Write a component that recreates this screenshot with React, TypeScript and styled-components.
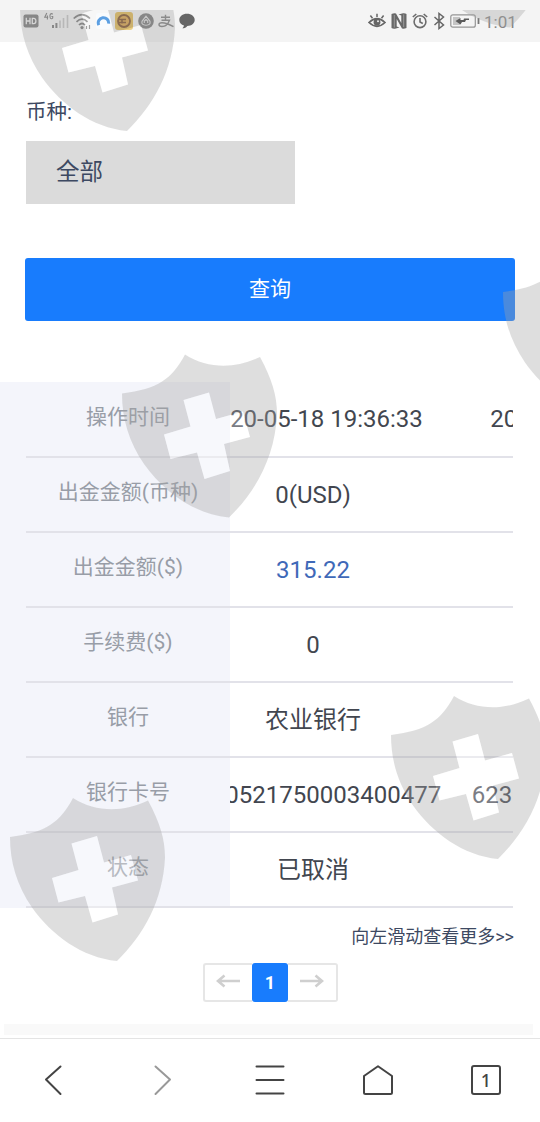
import React from 'react';
import styled, { createGlobalStyle } from 'styled-components';

const GlobalStyle = createGlobalStyle`
  * { box-sizing: border-box; }
  body {
    margin: 0;
    background: #fff;
    font-family: Roboto, "Noto Sans CJK SC", sans-serif;
    color: #3d4962;
  }
  svg { display: block; }
`;

const Screen = styled.div`
  position: relative;
  width: 540px;
  height: 1122px;
  overflow: hidden;
  display: flex;
  flex-direction: column;
  background: #fff;
`;

const StatusBar = styled.header`
  height: 42px;
  flex: none;
  display: flex;
  align-items: center;
  justify-content: space-between;
  padding: 0 23px 0 23px;
  background: #f4f4f4;
`;

const StatusGroup = styled.div<{ $gap: number }>`
  display: flex;
  align-items: center;
  gap: ${(p) => p.$gap}px;
`;

const Clock = styled.span`
  font-size: 17px;
  line-height: 20px;
  padding-top: 1px;
  color: #858585;
  width: 33px;
  margin-left: -1px;
  white-space: nowrap;
`;

const Filters = styled.section`
  display: flex;
  flex-direction: column;
  padding: 55px 25px 0 26px;
`;

const FieldLabel = styled.label`
  font-size: 20.5px;
  line-height: 30px;
  height: 30px;
`;

const SelectBox = styled.div`
  margin-top: 14px;
  width: 269px;
  height: 63px;
  padding-left: 30px;
  background: #dbdbdb;
  font-size: 23.5px;
  line-height: 62px;
`;

const QueryButton = styled.button`
  margin: 54px 0 0 -1px;
  height: 63px;
  padding: 0 0 5px;
  border: 0;
  border-radius: 3px;
  background: #187cfd;
  color: #fff;
  font: inherit;
  font-size: 21px;
`;

const Table = styled.section`
  display: flex;
  margin-top: 61px;
  height: 526px;
  flex: none;
`;

const HeadColumn = styled.div`
  width: 230px;
  padding-left: 26px;
  background: #f4f5fb;
`;

const ValueView = styled.div`
  width: 282.5px;
  overflow: hidden;
`;

const rowLine = `
  height: 75px;
  border-bottom: 2px solid #e2e2e9;
  &:first-child { height: 76px; }
`;

const HeadCell = styled.div`
  ${rowLine}
  display: flex;
  align-items: center;
  justify-content: center;
  padding-bottom: 9px;
  font-size: 21px;
  color: #989da7;
`;

const ValueRow = styled.div`
  ${rowLine}
  display: flex;
  align-items: center;
`;

const ValueCell = styled.div<{ $first?: boolean; $accent?: boolean }>`
  flex: 0 0 287px;
  margin-left: ${(p) => (p.$first ? -60.5 : 0)}px;
  text-align: center;
  white-space: nowrap;
  font-size: 24px;
  line-height: 36px;
  color: ${(p) => (p.$accent ? '#3f69b8' : '#42464f')};
`;

const MoreHint = styled.p`
  margin: 14px 26px 0 0;
  text-align: right;
  font-size: 18px;
  line-height: 29px;
  height: 27px;
`;

const Pager = styled.nav`
  display: flex;
  align-self: center;
  margin-top: 14px;
  height: 39px;
  width: 135px;
`;

const PagerStep = styled.button<{ $side: 'left' | 'right' }>`
  flex: 1;
  display: flex;
  align-items: center;
  justify-content: center;
  padding: 0 0 3px;
  background: #fff;
  border: 2px solid #e6e6e6;
  border-${(p) => (p.$side === 'left' ? 'right' : 'left')}: 0;
  border-radius: ${(p) => (p.$side === 'left' ? '3px 0 0 3px' : '0 3px 3px 0')};
`;

const PagerCurrent = styled.span`
  width: 36px;
  border-radius: 3px;
  background: #187cfd;
  color: #fff;
  font-size: 18px;
  font-weight: 700;
  line-height: 39px;
  text-align: center;
`;

const FooterStrip = styled.div`
  height: 11px;
  margin: 22px 7px 3px 4px;
  background: #f9f9f9;
`;

const BottomNav = styled.nav`
  flex: 1;
  display: grid;
  grid-template-columns: repeat(5, 1fr);
  justify-items: center;
  align-items: start;
  padding-top: 25px;
  border-top: 1px solid #e4e4e4;
  background: #fff;
`;

const TabCount = styled.div`
  width: 30px;
  height: 30px;
  margin-top: 1px;
  border: 2px solid #444;
  border-radius: 3px;
  color: #444;
  font-family: "Noto Sans", sans-serif;
  font-size: 18px;
  font-weight: 500;
  line-height: 26px;
  text-align: center;
`;

const WatermarkLayer = styled.svg`
  position: absolute;
  inset: 0;
  pointer-events: none;
`;

const rows: { label: string; values: string[]; accent?: boolean }[] = [
  { label: '操作时间', values: ['2020-05-18 19:36:33', '2020-05-18 19:36:33'] },
  { label: '出金金额(币种)', values: ['0(USD)'] },
  { label: '出金金额($)', values: ['315.22'], accent: true },
  { label: '手续费($)', values: ['0'] },
  { label: '银行', values: ['农业银行'] },
  { label: '银行卡号', values: ['6230521750003400477', '6230521750003400477'] },
  { label: '状态', values: ['已取消'] },
];

const shields = [
  [20, -32.5],
  [403, -136],
  [122, 354],
  [503, 252.5],
  [391, 695.5],
  [10, 797.5],
];

const Watermarks = () => (
  <WatermarkLayer width="540" height="1122" viewBox="0 0 540 1122">
    <defs>
      <clipPath id="wm-area">
        <rect x="0" y="10" width="540" height="1112" />
      </clipPath>
    </defs>
    <g clipPath="url(#wm-area)">
      {shields.map(([x, y]) => (
        <g key={`${x}-${y}`} transform={`translate(${x} ${y})`}>
          <path
            fill="rgba(163,163,163,.36)"
            fillRule="evenodd"
            d="M0 39.5C36 35 50 25 63 .5C86 15 113 15 138 3C150 25 155 42 155 60C153 103 134 137 107 163.5C72 160 42 138 22 110C7 88 0 65 0 39.5Z
               M61.5 46L87 38.5L94 65L121 57.5L128 83L102 90L108 117L82.5 125L75 98.5L48.5 105L42 80.5L68.5 72.5Z"
          />
          <path
            fill="rgba(255,255,255,.3)"
            d="M61.5 46L87 38.5L94 65L121 57.5L128 83L102 90L108 117L82.5 125L75 98.5L48.5 105L42 80.5L68.5 72.5Z"
          />
        </g>
      ))}
    </g>
  </WatermarkLayer>
);

const LeftStatus = () => (
  <StatusGroup $gap={4.5}>
    <svg width="16" height="16" viewBox="0 0 16 16">
      <rect x=".5" y="1.5" width="15" height="13" rx="2" fill="#777" />
      <path d="M3.3 4.8v6.4M7 4.8v6.4M3.3 8H7M9.3 5.4v5.2h1.4q2.2 0 2.2-2.6t-2.2-2.6z" fill="none" stroke="#f2f2f2" strokeWidth="1.3" />
    </svg>
    <svg width="25" height="18" viewBox="0 0 25 18">
      <path d="M2.8 1L.8 5.2h3.4M3.4 3.4v4M8.6 2.4Q7.7 1 6.6 2T6.3 6q1.3 1.6 2.4 0V4.5H7.4" fill="none" stroke="#777" strokeWidth="1.1" />
      <path d="M9 13v3M12.4 11v5" stroke="#777" strokeWidth="2" />
      <path d="M16 8.5V16M19.5 6V16M23.5 3V16" stroke="#c2c2c2" strokeWidth="1.6" />
    </svg>
    <svg width="18" height="17" viewBox="0 0 18 17">
      <g fill="none" stroke="#777" strokeWidth="1.7">
        <path d="M.7 5.5Q9-2.2 17 5.5" />
        <path d="M3.5 8.8Q9 3.5 14.5 8.8" />
        <path d="M6 12Q9 9 12 12" />
      </g>
      <circle cx="9" cy="14.6" r="1.6" fill="#777" />
      <path d="M13.5 13v3M16.5 12v4" stroke="#777" strokeWidth="1.2" />
    </svg>
    <svg width="15" height="16" viewBox="0 0 15 16">
      <rect width="15" height="16" rx="3" fill="#f6fafd" />
      <path d="M2.8 12.2A5.2 5.2 0 1 1 12.6 10.6" fill="none" stroke="#1676d6" strokeWidth="3" />
    </svg>
    <svg width="18" height="18" viewBox="0 0 18 18">
      <rect width="18" height="18" rx="3" fill="#e3b94f" />
      <circle cx="9" cy="9" r="6" fill="#d9a040" stroke="#7a4a22" strokeWidth="1.8" />
      <path d="M4 7.5h7M4 10.5h7M7 7.5v4" fill="none" stroke="#7a4a22" strokeWidth="1.6" />
    </svg>
    <svg width="16" height="16" viewBox="0 0 16 16">
      <circle cx="8" cy="8" r="7.8" fill="#777" />
      <path d="M8 3.2L4 8.3q-1 3.8 4 3.9 5-.1 4-3.9zM6.3 10V8L8 6.5 9.7 8v2" fill="none" stroke="#ddd" strokeWidth="1.1" />
    </svg>
    <svg width="16" height="15" viewBox="0 0 16 15">
      <path d="M3 3.3h9M7.5 .8V6M3.500 6.200H11.500Q9 12.500 4 12.500q-3 0-3-1.900t3-1.900q4.500 0 11.500 4" fill="none" stroke="#7d7d7d" strokeWidth="1.400" />
    </svg>
    <svg width="16" height="16" viewBox="0 0 16 16">
      <path d="M8 .8C3.6.8.3 3.5.3 6.900c0 2.700 2 4.800 4.700 5.600-.2 1.200-.8 2-1.700 2.800 2.200-.2 4-1 5-2.400C12.600 12.700 15.700 10.200 15.700 6.900 15.700 3.500 12.400.8 8 .8Z" fill="#666" />
    </svg>
  </StatusGroup>
);

const RightStatus = () => (
  <StatusGroup $gap={5}>
    <svg width="18" height="16" viewBox="0 0 18 16">
      <path d="M1 9.5Q9 2 17 9.5 9 17 1 9.5Z" fill="none" stroke="#666" strokeWidth="1.7" />
      <circle cx="9" cy="9.2" r="3.4" fill="#666" />
      <path d="M9 4V.8M4.500 5.200L2.400 2.500M13.500 5.200l2.100-2.700" stroke="#666" strokeWidth="1.500" />
      <circle cx="10" cy="8.300" r="1" fill="#eee" />
    </svg>
    <svg width="16" height="16" viewBox="0 0 16 16">
      <path d="M.5 1Q3 0 5 .5L10.300 10V2.500L7.500 1.500 12 .3Q14 0 15.500 1V15Q13 16 11 15.500L5.700 6V13.500L8.500 14.500 4 15.700Q2 16 .5 15Z" fill="#686868" />
      <path d="M3.300 2V14.500M12.700 1.500V14" stroke="#bbb" strokeWidth=".6" />
    </svg>
    <svg width="16" height="16" viewBox="0 0 16 16">
      <g fill="none" stroke="#6c6c6c" strokeWidth="1.600">
        <circle cx="8" cy="8.700" r="5.900" />
        <path d="M.8 4L4.300 1M15.200 4l-3.500-3M8 5v4l2.800 1.500" />
      </g>
    </svg>
    <svg width="12" height="18" viewBox="0 0 12 18">
      <path d="M1.500 5l9 8L6 16.500v-15L10.500 5l-9 8" fill="none" stroke="#666" strokeWidth="1.500" />
    </svg>
    <svg width="30" height="14" viewBox="0 0 30 14">
      <rect x=".8" y=".8" width="24.500" height="12.400" rx="2" fill="none" stroke="#959595" strokeWidth="1.200" />
      <rect x="3" y="3" width="7" height="8" fill="#c4c4c4" />
      <path d="M5.500 7l5-3v2h3l.5-1.500h5V6h-3l-1 2h-3l-1.500 2.500z" fill="#5a5a5a" />
      <path d="M28.500 4v6" stroke="#777" strokeWidth="1.800" />
    </svg>
    <Clock>1:01</Clock>
  </StatusGroup>
);

const Arrow = ({ flip }: { flip?: boolean }) => (
  <svg width="24" height="14" viewBox="0 0 24 14">
    <path
      d={flip ? 'M0 7h22M15.500 1.500L22 7l-6.500 5.500' : 'M24 7H2M8.500 1.500L2 7l6.500 5.500'}
      fill="none"
      stroke="#cfcfcf"
      strokeWidth="2.600"
    />
  </svg>
);

const NavIcon = ({ d, color = '#444' }: { d: string; color?: string }) => (
  <svg width="32" height="32" viewBox="0 0 32 32">
    <path d={d} fill="none" stroke={color} strokeWidth="2" strokeLinejoin="round" strokeLinecap="round" />
  </svg>
);

export default function App() {
  return (
    <Screen>
      <GlobalStyle />
      <StatusBar>
        <LeftStatus />
        <RightStatus />
      </StatusBar>
      <Filters>
        <FieldLabel>币种:</FieldLabel>
        <SelectBox>全部</SelectBox>
        <QueryButton>查询</QueryButton>
      </Filters>
      <Table>
        <HeadColumn>
          {rows.map((r) => (
            <HeadCell key={r.label}>{r.label}</HeadCell>
          ))}
        </HeadColumn>
        <ValueView>
          {rows.map((r) => (
            <ValueRow key={r.label}>
              {r.values.map((v, i) => (
                <ValueCell key={i} $first={i === 0} $accent={r.accent}>
                  {v}
                </ValueCell>
              ))}
            </ValueRow>
          ))}
        </ValueView>
      </Table>
      <MoreHint>向左滑动查看更多&gt;&gt;</MoreHint>
      <Pager>
        <PagerStep $side="left"><Arrow /></PagerStep>
        <PagerCurrent>1</PagerCurrent>
        <PagerStep $side="right"><Arrow flip /></PagerStep>
      </Pager>
      <FooterStrip />
      <BottomNav>
        <NavIcon d="M22.500 2.500L8 15.500L22.500 30" />
        <NavIcon d="M9.500 2.500L24 15.500L9.500 30" color="#999" />
        <NavIcon d="M2.500 2.500H29.500M2.500 16H29.500M2.500 29.500H29.500" />
        <NavIcon d="M16 2.200L30 12V28.500Q30 30 28.500 30H3.500Q2 30 2 28.500V12Z" />
        <TabCount>1</TabCount>
      </BottomNav>
      <Watermarks />
    </Screen>
  );
}
